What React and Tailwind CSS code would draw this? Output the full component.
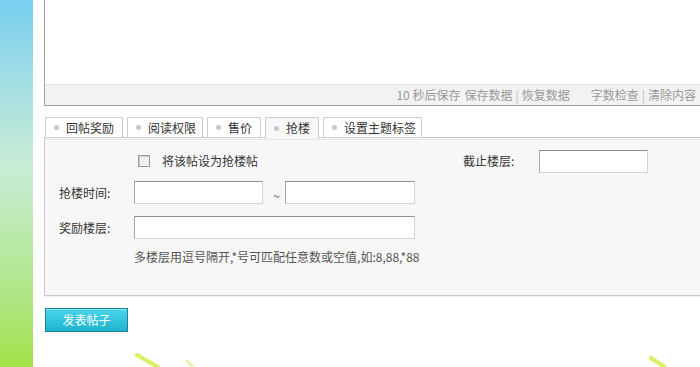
export default function App() {
  const tabs = ["回帖奖励", "阅读权限", "售价", "抢楼", "设置主题标签"];
  const tabW = ["w-[78px]", "w-[76px]", "w-[54px]", "w-[54px]", "w-[99px]"];
  const inputCls =
    "h-[23px] bg-white border border-[#d4d4d4] border-t-[#8f8f8f] border-l-[#a8a8a8]";
  return (
    <div
      className="w-[700px] h-[367px] overflow-hidden flex relative text-[12px] text-[#333]"
      style={{ fontFamily: '"Noto Sans CJK SC", "Noto Sans", sans-serif' }}
    >
      <div className="w-[33px] shrink-0 bg-gradient-to-b from-[#78cfee] via-[#c9ecd6] via-45% to-[#a3e246]" />
      <div className="flex-1 bg-white pl-[11px] flex flex-col">
        {/* editor */}
        <div className="h-[106px] border-l border-b border-[#a0a0a0] flex flex-col">
          <div className="h-[84px] bg-white" />
          <div className="flex-1 bg-[#f2f2f2] border-t border-[#e4e4e4] flex items-center justify-end pr-[4px] text-[#9a9a9a] whitespace-nowrap">
            <span>10 秒后保存</span>
            <span className="ml-[4px]">保存数据</span>
            <span className="mx-[3px] text-[#bbb]">|</span>
            <span>恢复数据</span>
            <span className="ml-[21px]">字数检查</span>
            <span className="mx-[3px] text-[#bbb]">|</span>
            <span>清除内容</span>
          </div>
        </div>
        {/* tabs */}
        <div className="mt-[11px] h-[21px] flex gap-[4px] relative z-10 pl-px">
          {tabs.map((t, i) => (
            <div
              key={t}
              className={`${tabW[i]} h-[21px] border border-[#cfcfcf] flex items-center pl-[8px] gap-[7px] ${
                i === 3 ? "bg-[#f7f7f7] border-b-[#f7f7f7] h-[22px]" : "bg-white"
              }`}
            >
              <span className="w-[5px] h-[5px] rounded-full bg-[#c8c8c8]" />
              <span className="leading-none">{t}</span>
            </div>
          ))}
        </div>
        {/* panel */}
        <div className="h-[159px] -mt-px border border-r-0 border-[#c8c8c8] bg-[#f7f7f7] relative">
          <div className="h-px bg-[#e6e6e6] mt-px" />
          <div className="flex items-center h-[22px] mt-[10px]">
            <div className="w-[93px]" />
            <div className="w-[12px] h-[12px] border border-[#999] bg-[#f0f0f0] shadow-[inset_1px_1px_0_#ccc]" />
            <span className="ml-[12px]">将该帖设为抢楼帖</span>
            <span className="ml-[205px]">截止楼层:</span>
            <div className={`${inputCls} ml-[25px] w-[109px]`} />
          </div>
          <div className="flex items-center h-[23px] mt-[9px]">
            <span className="ml-[14px] w-[75px]">抢楼时间:</span>
            <div className={`${inputCls} w-[129px]`} />
            <span className="ml-[10px] w-[12px] mt-[6px] text-[#555]">~</span>
            <div className={`${inputCls} w-[130px]`} />
          </div>
          <div className="flex items-center h-[23px] mt-[12px]">
            <span className="ml-[14px] w-[75px]">奖励楼层:</span>
            <div className={`${inputCls} w-[281px]`} />
          </div>
          <div className="ml-[89px] mt-[9px] text-[#555]">
            多楼层用逗号隔开,*号可匹配任意数或空值,如:8,88,*88
          </div>
        </div>
        <div className="h-px bg-[#f0f0f0]" />
        {/* button */}
        <div className="mt-[11px] pl-px">
          <button className="w-[83px] h-[24px] border border-[#1f7f98] bg-gradient-to-b from-[#48d6ea] to-[#1db3cf] text-white text-[12px] leading-none shadow-[inset_0_1px_0_#8ae8f4]">
            发表帖子
          </button>
        </div>
      </div>
      {/* decorative strokes */}
      <svg className="absolute left-0 top-0 pointer-events-none" width="700" height="367">
        <path d="M137 355 L158 367" stroke="#d2ef4a" strokeWidth="4" strokeLinecap="round" opacity="0.85" />
        <path d="M187 361 L193 367" stroke="#dff38a" strokeWidth="3" strokeLinecap="round" opacity="0.7" />
        <path d="M651 358 L665 367" stroke="#d2ef4a" strokeWidth="4" strokeLinecap="round" opacity="0.85" />
      </svg>
    </div>
  );
}
